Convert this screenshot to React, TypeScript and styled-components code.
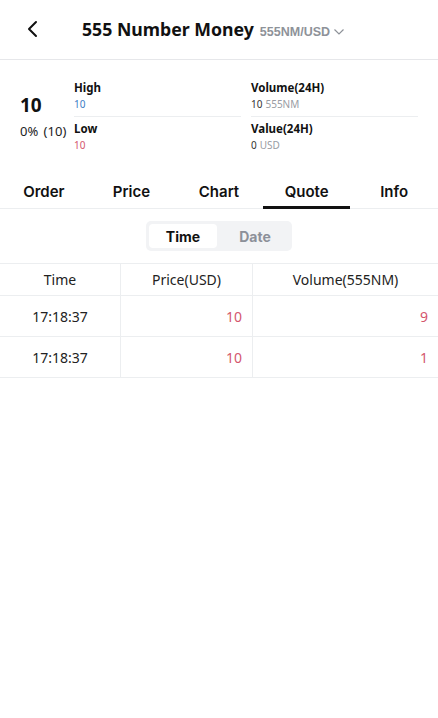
import React, { useState } from "react";
import styled, { createGlobalStyle } from "styled-components";

const Global = createGlobalStyle`
  html, body { margin: 0; padding: 0; background: #fff; }
  body { font-family: "Noto Sans", "Liberation Sans", sans-serif; color: #111; }
  * { box-sizing: border-box; }
`;

const Page = styled.div`
  width: 438px;
  min-height: 718px;
  background: #fff;
`;

const Header = styled.header`
  height: 60px;
  display: flex;
  align-items: center;
  border-bottom: 1px solid #e6e7ea;
  padding-left: 24px;
`;

const BackButton = styled.button`
  width: 18px;
  height: 24px;
  border: 0;
  background: none;
  padding: 0;
  display: flex;
  align-items: center;
  justify-content: center;
  margin-right: 40px;
  margin-top: -2px;
`;

const Title = styled.h1`
  margin: 0;
  font-family: "Noto Sans", sans-serif;
  font-weight: 700;
  font-size: 17.7px;
  color: #111;
  line-height: 1;
`;

const Pair = styled.span`
  margin-left: 6px;
  margin-top: 4px;
  font-family: "Liberation Sans", Arial, sans-serif;
  font-weight: 700;
  font-size: 12.5px;
  color: #8e9299;
  display: flex;
  align-items: center;
  gap: 3px;
`;

const Stats = styled.section`
  display: flex;
  padding: 20px 0 0 20px;
`;

const PriceBox = styled.div`
  width: 54px;
  display: flex;
  flex-direction: column;
  justify-content: center;
  padding-top: 0px;
`;

const BigPrice = styled.div`
  font-weight: 700;
  font-size: 19px;
  line-height: 24px;
`;

const Change = styled.div`
  font-size: 13px;
  line-height: 18px;
  margin-top: 5px;
  white-space: nowrap;
  color: #222;
  word-spacing: 2px;
`;

const StatCol = styled.div<{ $gapRight?: boolean }>`
  width: ${(p) => (p.$gapRight ? "177px" : "167px")};
  padding-right: ${(p) => (p.$gapRight ? "10px" : "0")};
  display: flex;
  flex-direction: column;
`;

const StatItem = styled.div<{ $divider?: boolean }>`
  display: flex;
  flex-direction: column;
  padding: ${(p) => (p.$divider ? "0 0 4px" : "4px 0 0")};
  border-bottom: ${(p) => (p.$divider ? "1px solid #eceef0" : "none")};
`;

const StatLabel = styled.div`
  font-weight: 700;
  font-size: 11.5px;
  line-height: 16px;
  color: #111;
`;

const StatValue = styled.div<{ $color?: string }>`
  font-size: 10px;
  line-height: 16px;
  color: ${(p) => p.$color || "#333"};
`;

const Unit = styled.span`
  color: #999ca3;
  margin-left: 3px;
`;

const Tabs = styled.nav`
  display: grid;
  grid-template-columns: repeat(5, 1fr);
  margin-top: 21px;
  border-bottom: 1px solid #eceef0;
`;

const Tab = styled.div<{ $active?: boolean }>`
  display: flex;
  justify-content: center;
  align-items: center;
  height: 34px;
  font-family: Inter, "Liberation Sans", sans-serif;
  font-weight: 600;
  font-size: 15px;
  color: #111;
  position: relative;
  &::after {
    content: "";
    position: absolute;
    left: 0;
    right: 0;
    bottom: -1px;
    height: 3px;
    background: ${(p) => (p.$active ? "#111" : "transparent")};
  }
`;

const SegmentWrap = styled.div`
  display: flex;
  justify-content: center;
  padding: 12px 0 12px;
`;

const Segment = styled.div`
  display: flex;
  background: #f2f3f5;
  border-radius: 5px;
  padding: 3px;
  width: 146px;
`;

const SegBtn = styled.div<{ $active?: boolean }>`
  flex: 1;
  height: 24px;
  display: flex;
  align-items: center;
  justify-content: center;
  border-radius: 4px;
  font-family: Inter, "Liberation Sans", sans-serif;
  font-weight: 700;
  font-size: 14px;
  background: ${(p) => (p.$active ? "#fff" : "transparent")};
  color: ${(p) => (p.$active ? "#111" : "#8c9099")};
  margin-right: ${(p) => (p.$active ? "4px" : "0")};
`;

const Table = styled.div`
  border-top: 1px solid #eceef0;
`;

const Row = styled.div<{ $head?: boolean }>`
  display: grid;
  grid-template-columns: 121px 132px 1fr;
  height: ${(p) => (p.$head ? "32px" : "41px")};
  border-bottom: 1px solid #eceef0;
`;

const Cell = styled.div<{ $align?: string; $color?: string }>`
  display: flex;
  align-items: center;
  justify-content: ${(p) => (p.$align === "right" ? "flex-end" : "center")};
  padding: 0 10px;
  font-size: 14px;
  color: ${(p) => p.$color || "#222"};
  border-right: 1px solid #eceef0;
  &:last-child { border-right: 0; }
`;

const RED = "#d4566e";
const BLUE = "#3b7cc4";

const trades = [
  { time: "17:18:37", price: "10", vol: "9" },
  { time: "17:18:37", price: "10", vol: "1" },
];

export default function App() {
  const [tab] = useState("Quote");
  const [seg, setSeg] = useState("Time");
  return (
    <Page>
      <Global />
      <Header>
        <BackButton aria-label="back">
          <svg width="14" height="20" viewBox="0 0 14 20">
            <path d="M10 3 L3 10 L10 17" fill="none" stroke="#111" strokeWidth="2" strokeLinecap="round" strokeLinejoin="round" />
          </svg>
        </BackButton>
        <Title>555 Number Money</Title>
        <Pair>
          555NM/USD
          <svg width="12" height="8" viewBox="0 0 12 8">
            <path d="M1.5 1.5 L6 6 L10.5 1.5" fill="none" stroke="#8e9299" strokeWidth="1.2" />
          </svg>
        </Pair>
      </Header>
      <Stats>
        <PriceBox>
          <BigPrice>10</BigPrice>
          <Change>0% (10)</Change>
        </PriceBox>
        <StatCol $gapRight>
          <StatItem $divider>
            <StatLabel>High</StatLabel>
            <StatValue $color={BLUE}>10</StatValue>
          </StatItem>
          <StatItem>
            <StatLabel>Low</StatLabel>
            <StatValue $color={RED}>10</StatValue>
          </StatItem>
        </StatCol>
        <StatCol>
          <StatItem $divider>
            <StatLabel>Volume(24H)</StatLabel>
            <StatValue>10<Unit>555NM</Unit></StatValue>
          </StatItem>
          <StatItem>
            <StatLabel>Value(24H)</StatLabel>
            <StatValue>0<Unit>USD</Unit></StatValue>
          </StatItem>
        </StatCol>
      </Stats>
      <Tabs>
        {["Order", "Price", "Chart", "Quote", "Info"].map((t) => (
          <Tab key={t} $active={t === tab}>{t}</Tab>
        ))}
      </Tabs>
      <SegmentWrap>
        <Segment>
          {["Time", "Date"].map((s) => (
            <SegBtn key={s} $active={s === seg} onClick={() => setSeg(s)}>{s}</SegBtn>
          ))}
        </Segment>
      </SegmentWrap>
      <Table>
        <Row $head>
          <Cell>Time</Cell>
          <Cell>Price(USD)</Cell>
          <Cell>Volume(555NM)</Cell>
        </Row>
        {trades.map((r, i) => (
          <Row key={i}>
            <Cell>{r.time}</Cell>
            <Cell $align="right" $color={RED}>{r.price}</Cell>
            <Cell $align="right" $color={RED}>{r.vol}</Cell>
          </Row>
        ))}
      </Table>
    </Page>
  );
}
